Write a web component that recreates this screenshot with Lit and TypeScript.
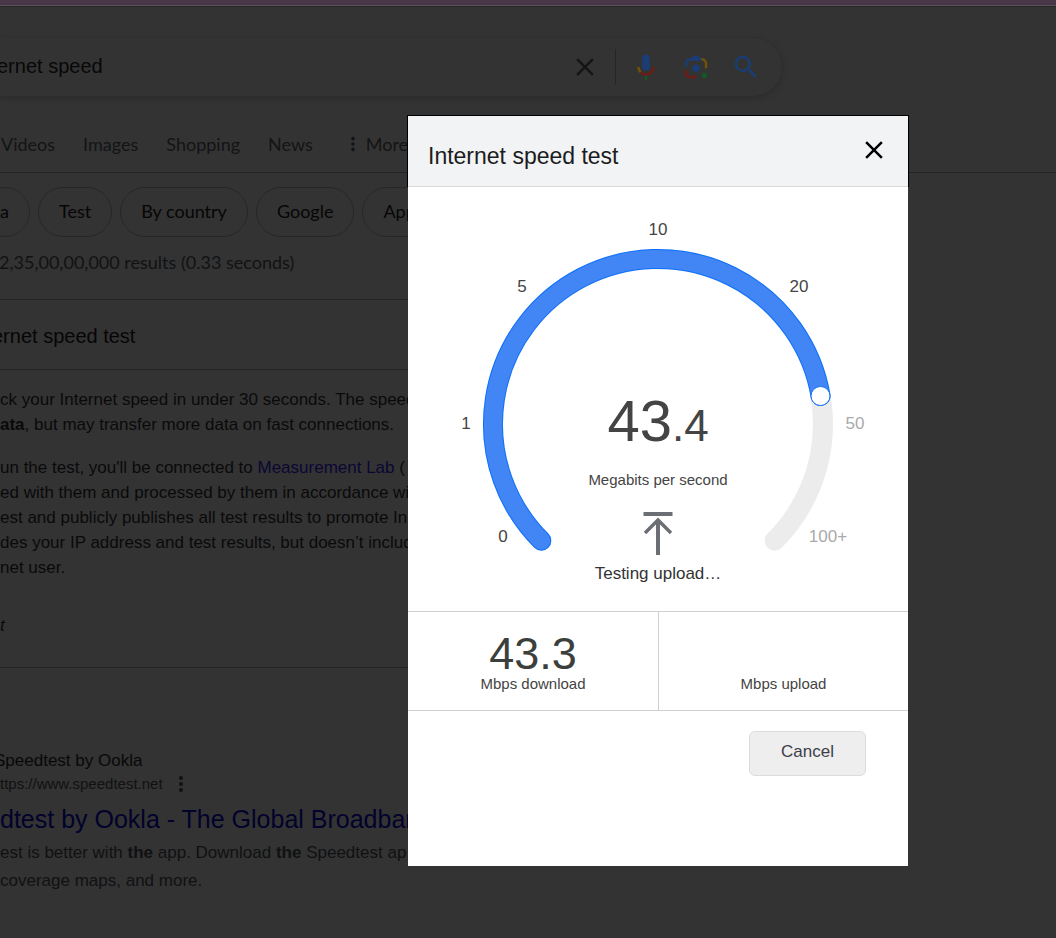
import { LitElement, html, css, svg } from "lit";
import { customElement, property } from "lit/decorators.js";

const closeIcon = html`<svg viewBox="0 0 24 24" aria-hidden="true"><path fill="currentColor" d="M19 6.41 17.59 5 12 10.59 6.41 5 5 6.41 10.59 12 5 17.59 6.41 19 12 13.41 17.59 19 19 17.59 13.41 12z"/></svg>`;
const dotsIcon = html`<svg viewBox="0 0 6 20" aria-hidden="true"><g fill="currentColor"><circle cx="3" cy="4" r="2"/><circle cx="3" cy="10" r="2"/><circle cx="3" cy="16" r="2"/></g></svg>`;

@customElement("search-page")
class SearchPage extends LitElement {
  static styles = css`
    :host {
      display: block;
      min-height: 100vh;
      box-sizing: border-box;
      overflow: hidden;
      background: #333;
      border-top: 5px solid #493646;
      color: #0a0a0a;
      font: 17px/25px "Liberation Sans", Arial, sans-serif;
    }
    * { box-sizing: border-box; }
    a { text-decoration: none; color: inherit; }
    button { border: 0; padding: 0; background: none; color: inherit; cursor: pointer; font: inherit; }
    svg { display: block; }
    .strip { height: 2px; background: #282828; border-top: 1px solid #555; }
    .search {
      display: flex;
      align-items: center;
      gap: 15px;
      max-width: 782px;
      height: 58px;
      margin-top: 31px;
      padding-right: 21px;
      border-radius: 0 29px 29px 0;
      box-shadow: 0 2px 5px 1px #2d2d2d, 0 0 1px #2d2d2d;
    }
    .search input {
      flex: 1;
      min-width: 0;
      height: 40px;
      margin: 0 0 2px -3px;
      padding: 0;
      border: 0;
      outline: 0;
      background: none;
      color: #080808;
      font: 20px/40px "Liberation Sans", Arial, sans-serif;
    }
    .icon, .icon svg { width: 30px; height: 30px; }
    .clear { color: #141516; }
    .sep { width: 1px; height: 36px; background: #242526; }
    .tools { display: flex; gap: 20px; }
    .tabs {
      display: flex;
      align-items: center;
      gap: 28px;
      height: 77px;
      padding: 20px 0 0 1px;
      border-bottom: 1px solid #232323;
      color: #131415;
      font: 18px/24px Lato, sans-serif;
    }
    .more { display: flex; align-items: center; gap: 10px; margin-left: 9px; }
    .more svg { width: 6px; height: 18px; }
    .chips {
      display: flex;
      gap: 8px;
      margin: 14px 0 0 -21px;
      color: #060606;
      font: 18px/24px Lato, sans-serif;
    }
    .chip { height: 50px; padding: 11px 20px; border: 1px solid #262728; border-radius: 25px; white-space: nowrap; }
    .count { margin: 13px 0 25px -1px; color: #111213; font: 18px/24px Lato, sans-serif; }
    .card { max-width: 814px; border: solid #242424; border-width: 1px 0; margin: 0; white-space: nowrap; }
    .card h2 { margin: 0; padding: 24px 0 20px; border-bottom: 1px solid #242424; font-size: 20px; line-height: 25px; font-weight: 400; color: #060606; }
    .cut { margin-left: -8px; }
    .card p { margin: 17px 0 18px; }
    .card a { color: #0b0733; }
    .note { margin: 33px 0 29px; font-style: italic; }
    .result { margin-top: 80px; white-space: nowrap; color: #101112; }
    .site { margin-left: -6px; color: #080808; }
    .url { display: flex; align-items: center; gap: 15px; font-size: 15px; line-height: 22px; height: 22px; }
    .url svg { width: 6px; height: 20px; }
    .result h3 { margin: 5px 0 1px; font-size: 25px; line-height: 38px; font-weight: 400; color: #02022c; }
    .result p { margin: 0; line-height: 28px; }
  `;

  render() {
    return html`
      <div class="strip"></div>
      <form class="search" role="search">
        <input type="text" aria-label="Search" .value=${"ernet speed"} />
        <button class="icon clear" type="button" aria-label="Clear">${closeIcon}</button>
        <span class="sep"></span>
        <span class="tools">
          <button class="icon" type="button" aria-label="Search by voice">
            <svg viewBox="0 0 24 24"><path fill="#1a3d75" d="m12 15c1.66 0 3-1.31 3-2.97v-7.02c0-1.66-1.34-3.01-3-3.01s-3 1.34-3 3.01v7.02c0 1.66 1.34 2.97 3 2.97z"/><path fill="#115a24" d="m11 18.08h2v3.92h-2z"/><path fill="#705206" d="m7.05 16.87c-1.27-1.33-2.05-2.83-2.05-4.87h2c0 1.45.56 2.42 1.47 3.38v.32l-1.15 1.18z"/><path fill="#6c1c15" d="m12 16.93a4.97 5.25 0 0 1-3.54-1.55l-1.41 1.49c1.26 1.34 3.02 2.13 4.95 2.13 3.87 0 6.99-2.92 6.99-7h-1.99c0 2.92-2.24 4.93-5.01 4.93z"/></svg>
          </button>
          <button class="icon" type="button" aria-label="Search by image">
            <svg viewBox="0 0 192 192"><circle fill="#115a24" cx="150" cy="150" r="17"/><circle fill="#1a3d75" cx="96" cy="104" r="24"/><path fill="#6c1c15" d="M24 135.2c0 18.11 14.69 32.8 32.8 32.8H96v-16l-40.1-.1c-8.8 0-15.9-8.19-15.9-17.9v-18H24z"/><path fill="#705206" d="M168 72.8c0-18.11-14.69-32.8-32.8-32.8H116l20 16c8.8 0 16 8.29 16 18v30h16z"/><path fill="#1a3d75" d="M112 24H80L68 40H56.8C38.69 40 24 54.69 24 72.8V92h16V74c0-9.71 7.2-18 16-18h80l-12-16z"/></svg>
          </button>
          <button class="icon" type="submit" aria-label="Search">
            <svg viewBox="0 0 24 24"><path fill="#1a3d75" d="M15.5 14h-.79l-.28-.27A6.471 6.471 0 0 0 16 9.5 6.5 6.5 0 1 0 9.5 16c1.61 0 3.09-.59 4.23-1.57l.27.28v.79l5 4.99L20.49 19zm-6 0C7.01 14 5 11.99 5 9.5S7.01 5 9.5 5 14 7.01 14 9.5 11.99 14 9.5 14z"/></svg>
          </button>
        </span>
      </form>
      <nav class="tabs">
        <a href="#videos">Videos</a><a href="#images">Images</a><a href="#shopping">Shopping</a><a href="#news">News</a>
        <button class="more" type="button">${dotsIcon}More</button>
      </nav>
      <nav class="chips">
        ${["a", "Test", "By country", "Google", "App"].map((t) => html`<a class="chip" href="#filter">${t}</a>`)}
      </nav>
      <div class="count">2,35,00,00,000 results (0.33 seconds)</div>
      <section class="card">
        <h2><div class="cut">ernet speed test</div></h2>
        <p>ck your Internet speed in under 30 seconds. The speed<br /><b>ata</b>, but may transfer more data on fast connections.</p>
        <p>un the test, you'll be connected to <a href="#mlab">Measurement Lab</a> (<br />ed with them and processed by them in accordance wi<br />est and publicly publishes all test results to promote In<br />des your IP address and test results, but doesn’t includ<br />net user.</p>
        <div class="note">t</div>
      </section>
      <article class="result">
        <div class="site">Speedtest by Ookla</div>
        <div class="url"><span>ttps://www.speedtest.net</span><button type="button" aria-label="About this result">${dotsIcon}</button></div>
        <h3><a href="#speedtest">dtest by Ookla - The Global Broadban</a></h3>
        <p>est is better with <b>the</b> app. Download <b>the</b> Speedtest ap<br />coverage maps, and more.</p>
      </article>
    `;
  }
}

@customElement("speed-gauge")
class SpeedGauge extends LitElement {
  @property({ type: Number }) whole = 43;
  @property({ type: Number }) tenth = 4;

  static styles = css`
    :host { display: grid; justify-items: center; font-family: "Liberation Sans", Arial, sans-serif; color: #3c3c3c; }
    .dial, .readout { grid-area: 1 / 1; }
    .dial { display: block; width: 100%; max-width: 500px; }
    .track { fill: none; stroke: #ececec; stroke-width: 20; stroke-linecap: round; }
    .edge { fill: none; stroke: #0b70fb; stroke-width: 20; stroke-linecap: round; }
    .fill { fill: none; stroke: #4285f4; stroke-width: 18; stroke-linecap: round; }
    .knob { fill: #fff; stroke: #1a73f0; stroke-width: 1; }
    .tick { font-size: 17px; text-anchor: middle; fill: #444; }
    .off { fill: #aaa; }
    .readout { display: flex; flex-direction: column; align-items: center; padding-top: 200px; }
    .value { font-size: 58px; line-height: 68px; color: #444; }
    .tenth { font-size: 44px; }
    .unit { margin-top: 10px; font-size: 15px; line-height: 20px; color: #444; }
    .arrow { width: 30px; height: 44px; margin-top: 21px; }
    .phase { margin-top: 7px; font-size: 17px; line-height: 24px; color: #333; }
  `;

  private ticks: [string, number, number][] = [
    ["0", 95, 355], ["1", 58, 242], ["5", 114, 105], ["10", 250, 48],
    ["20", 391, 105], ["50", 447, 242], ["100+", 420, 355],
  ];

  render() {
    return html`
      <svg class="dial" viewBox="0 0 500 424" role="img" aria-label="Speed dial">
        <path class="track" d="M133.33 353.67A165 165 0 1 1 366.67 353.67"/>
        <path class="edge" d="M133.33 353.67A165 165 0 1 1 412.6 209"/>
        <path class="fill" d="M133.33 353.67A165 165 0 1 1 412.6 209"/>
        <circle class="knob" cx="412.5" cy="209" r="9.5"/>
        ${this.ticks.map(([label, x, y]) => svg`<text class="tick ${parseInt(label) > this.whole ? "off" : ""}" x=${x} y=${y}>${label}</text>`)}
      </svg>
      <div class="readout">
        <div class="value">${this.whole}<span class="tenth">.${this.tenth}</span></div>
        <div class="unit">Megabits per second</div>
        <svg class="arrow" viewBox="0 0 30 44" aria-hidden="true"><g fill="none" stroke="#6b6f75" stroke-width="4"><path d="M.5 3H29.5"/><path d="M15 44V9"/><path d="M2 22 15 9 28 22" stroke-width="3.4"/></g></svg>
        <div class="phase">Testing upload…</div>
      </div>
    `;
  }
}

@customElement("app-root")
class AppRoot extends LitElement {
  static styles = css`
    :host { display: block; position: relative; min-height: 100vh; font-family: "Liberation Sans", Arial, sans-serif; }
    * { box-sizing: border-box; }
    .overlay {
      position: absolute;
      inset: 0;
      display: flex;
      justify-content: flex-end;
      align-items: flex-start;
      padding: 116px 148px 0 0;
    }
    .dialog { width: 500px; background: #fff; }
    header {
      display: flex;
      justify-content: space-between;
      align-items: flex-start;
      height: 71px;
      padding: 19px 19px 0 20px;
      background: #f1f3f4;
      border-bottom: 1px solid #d6d8da;
      box-shadow: 0 0 0 1px #000;
      clip-path: inset(-1px -1px 0 -1px);
    }
    h1 { margin: 6px 0 0; font-size: 23px; line-height: 30px; font-weight: 400; color: #1c1c1c; }
    button { font: inherit; cursor: pointer; }
    .close { width: 30px; height: 30px; padding: 0; border: 0; background: none; color: #000; }
    .close svg { display: block; width: 30px; height: 30px; }
    .stats { display: grid; grid-template-columns: 1fr 1fr; border: solid #d0d0d0; border-width: 1px 0; }
    .stat { height: 98px; padding-top: 17px; text-align: center; color: #3c3f3c; }
    .stat + .stat { border-left: 1px solid #d0d0d0; }
    .amount { height: 45px; font-size: 45px; line-height: 50px; }
    .label { font-size: 15px; line-height: 20px; color: #444; }
    footer { display: flex; justify-content: flex-end; padding: 20px 42px 90px; }
    .cancel {
      height: 45px;
      padding: 0 31px 3px;
      border: 1px solid #dcdcdc;
      border-radius: 6px;
      background: #eee;
      color: #3c4048;
      font-size: 17px;
    }
  `;

  render() {
    return html`
      <search-page></search-page>
      <div class="overlay">
        <div class="dialog" role="dialog" aria-label="Internet speed test">
          <header>
            <h1>Internet speed test</h1>
            <button class="close" type="button" aria-label="Close">${closeIcon}</button>
          </header>
          <speed-gauge></speed-gauge>
          <div class="stats">
            <div class="stat"><div class="amount">43.3</div><div class="label">Mbps download</div></div>
            <div class="stat"><div class="amount"></div><div class="label">Mbps upload</div></div>
          </div>
          <footer><button class="cancel" type="button">Cancel</button></footer>
        </div>
      </div>
    `;
  }
}
